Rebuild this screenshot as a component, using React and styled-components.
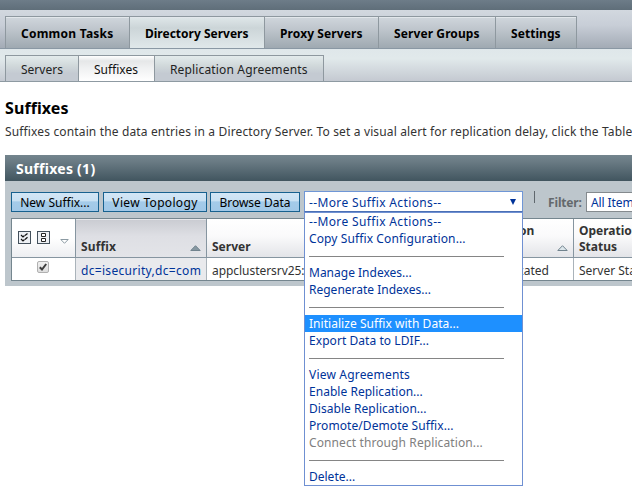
import React from 'react';
import styled, { createGlobalStyle } from 'styled-components';

const GlobalStyle = createGlobalStyle`
  html, body { margin: 0; background: #fff; }
  body { overflow: hidden; }
  * { box-sizing: border-box; }
`;

const Page = styled.div`
  width: 632px;
  height: 489px;
  overflow: hidden;
  font: 12px/17px 'Noto Sans', 'Open Sans', sans-serif;
  color: #333;
  white-space: nowrap;
`;

const Masthead = styled.div`
  height: 10px;
  background: linear-gradient(#6d7c88, #5f6e79);
`;

const PrimaryNav = styled.nav`
  display: flex;
  height: 39px;
  padding: 6px 0 0 5px;
  background: linear-gradient(#d2d8df, #c8ced7 40%, #a3abb5);
  border-bottom: 1px solid #8a98a4;
`;

const PrimaryTab = styled.a`
  width: ${(p) => p.$width}px;
  padding: 8px 0 0 15px;
  border: solid #8e989f;
  border-width: 1px 0 0 1px;
  font-weight: 700;
  letter-spacing: ${(p) => p.$tracking || 0}px;
  color: #000;
  background: ${(p) => (p.$active
    ? 'linear-gradient(#dfe7e9, #ccd5d8 35%, #e0e8ea)'
    : 'linear-gradient(#d0d6dc, #bec5cc 40%, #9fa9b1)')};
  box-shadow: inset 0 1px #e2e7eb;
  &:last-child { border-right-width: 1px; }
`;

const SecondaryNav = styled.nav`
  display: flex;
  height: 33px;
  padding: 6px 0 0 5px;
  background: linear-gradient(#dfe7ea, #e1e9eb 30%, #c4c9d1);
  border-bottom: 1px solid #8e9aa2;
`;

const SecondaryTab = styled.a`
  width: ${(p) => p.$width}px;
  padding: 5px 0 0 15px;
  border: solid #8e989f;
  border-width: 1px 0 0 1px;
  letter-spacing: ${(p) => p.$tracking || 0}px;
  color: ${(p) => (p.$active ? '#111' : '#222')};
  background: ${(p) => (p.$active
    ? 'linear-gradient(#fff, #e5e7e8 20%, #f0f1f2 50%, #fff)'
    : 'linear-gradient(#e3ebec, #d0d8da 40%, #c4cad2 70%, #c4cad2)')};
  &:last-child { border-right-width: 1px; }
`;

const Title = styled.h1`
  margin: 15px 0 0 5px;
  font-size: 16px;
  line-height: 22px;
  letter-spacing: 0.08px;
  color: #000;
`;

const Description = styled.p`
  margin: 4px 0 0 5px;
  height: 32px;
  letter-spacing: 0.145px;
`;

const Panel = styled.section`
  margin-left: 5px;
  height: 131px;
  background: #bdc6cc;
`;

const PanelHeader = styled.h2`
  margin: 0;
  height: 26px;
  padding-left: 11px;
  font-size: 14px;
  line-height: 27px;
  letter-spacing: 0.27px;
  color: #fff;
  background: linear-gradient(#74858e, #6a7b84 25%, #41555f);
`;

const Toolbar = styled.div`
  display: flex;
  align-items: flex-start;
  height: 37px;
  padding: 10px 0 0 6px;
  & > * { flex-shrink: 0; }
`;

const Button = styled.button`
  width: ${(p) => p.$width}px;
  height: 20px;
  margin: 1px ${(p) => p.$gap || 4}px 0 0;
  padding: 0;
  border: 1px solid #17618f;
  outline: 0;
  font: inherit;
  line-height: 19px;
  letter-spacing: ${(p) => p.$tracking || 0}px;
  color: #000;
  background: linear-gradient(#d3e6f5, #c9e1f3 42%, #a4cbe9 50%, #a1c8e7);
`;

const Select = styled.div`
  position: relative;
  display: flex;
  justify-content: space-between;
  align-items: center;
  width: 219px;
  height: 21px;
  padding: 1px 6px 0 4px;
  border: 1px solid #6f96d6;
  border-bottom-color: #4a6fb5;
  letter-spacing: 0.36px;
  color: #003399;
  background: #fff;
`;

const Menu = styled.ul`
  position: absolute;
  z-index: 2;
  top: 20px;
  left: -1px;
  width: 219px;
  height: 274px;
  margin: 0;
  padding: 0;
  list-style: none;
  border: 1px solid #6f90d2;
  background: #fff;
`;

const Option = styled.li`
  height: 17px;
  padding-left: 4px;
  line-height: 18px;
  letter-spacing: ${(p) => p.$tracking || 0}px;
  color: ${(p) => (p.$selected ? '#fff' : p.$disabled ? '#808080' : '#003399')};
  background: ${(p) => (p.$selected ? '#1e90ff' : 'transparent')};
`;

const Separator = styled.li`
  width: 195px;
  height: 17px;
  margin-left: 4px;
  padding-top: 9px;
  &::before { content: ''; display: block; height: 1px; background: #858585; }
`;

const Divider = styled.span`
  width: 1px;
  height: 12px;
  margin: 0 13px 0 11px;
  background: #5f676d;
`;

const FilterLabel = styled.label`
  width: 38px;
  padding-top: 3px;
  font-weight: 700;
  letter-spacing: -0.15px;
  color: #64696d;
`;

const FilterSelect = styled.div`
  width: 90px;
  height: 20px;
  margin-top: 1px;
  padding-left: 4px;
  line-height: 19px;
  border: 1px solid #848a8e;
  letter-spacing: -0.1px;
  color: #003399;
  background: #fff;
`;

const Table = styled.div`
  display: grid;
  grid-template-columns: 64px 131px 249px 118px 80px;
  grid-template-rows: 39px 22px;
  width: 643px;
  margin-left: 6px;
  border: solid #75868f;
  border-width: 1px 0 1px 1px;
`;

const HeaderCell = styled.div`
  display: flex;
  align-items: flex-end;
  justify-content: space-between;
  padding: 0 5px 2px ${(p) => p.$inset || 5}px;
  font-weight: 700;
  line-height: 16px;
  letter-spacing: ${(p) => p.$tracking || 0}px;
  border: solid #8695a0;
  border-width: 0 1px 1px 0;
  background: ${(p) => (p.$sorted
    ? 'linear-gradient(#c9cbd1, #dedfe4 45%, #e3e4e8)'
    : 'linear-gradient(#fff, #fafafb 45%, #e3e4e8)')};
  box-shadow: inset 0 1px ${(p) => (p.$sorted ? '#e7e8ec' : '#fff')};
`;

const SelectionHeader = styled(HeaderCell)`
  justify-content: flex-start;
  align-items: center;
  gap: 6px;
  padding: 0 0 1px 6px;
  background: linear-gradient(#fff, #fff 50%, #edeef1);
`;

const Cell = styled.div`
  padding: 4px 0 0 ${(p) => p.$inset || 5}px;
  letter-spacing: ${(p) => p.$tracking || 0}px;
  color: ${(p) => (p.$link ? '#003399' : '#333')};
  background: ${(p) => (p.$sorted ? '#e9eaed' : '#fff')};
  border-right: 1px solid #aab3ba;
`;

const Check = styled.span`
  display: flex;
  width: 12px;
  height: 12px;
  margin: -1px 0 0 -1px;
  border: 1px solid #b0b0b0;
  border-radius: 2px;
  background: linear-gradient(#f0f0f0, #dedede);
`;

const SortIcon = styled.svg`
  flex: none;
  margin-bottom: 4px;
`;

const ToggleIcon = styled.svg`
  margin: 7px 0 0 4px;
`;

const ArrowUp = ({ filled }) => (
  <SortIcon width="11" height="6" viewBox="0 0 11 6">
    <path d="M.8 5.5 5.5.7l4.7 4.8z" fill={filled ? '#8798a2' : '#dce6eb'} stroke="#71838e" />
  </SortIcon>
);

const SelectAllIcon = () => (
  <svg width="13" height="13" viewBox="0 0 13 13">
    <rect x=".5" y=".5" width="12" height="12" fill="#edf0f4" stroke="#44515c" />
    <path d="m3 4 2 2 1.500-1.500M7 4.500l2.500-2M3 8l2 2 1.500-1.500M7 8.500l2.500-2.200" fill="none" stroke="#111" strokeWidth="1.2" />
  </svg>
);

const DeselectAllIcon = () => (
  <svg width="13" height="13" viewBox="0 0 13 13">
    <rect x=".5" y=".5" width="12" height="12" fill="#edf0f4" stroke="#44515c" />
    <path d="M4.500 2.500h4v3h-4zM4.500 7.500h4v3h-4z" fill="#fff" stroke="#222" />
  </svg>
);

const options = [
  { text: '--More Suffix Actions--', tracking: 0.36 },
  { text: 'Copy Suffix Configuration...', tracking: 0.11 },
  null,
  { text: 'Manage Indexes...' },
  { text: 'Regenerate Indexes...' },
  null,
  { text: 'Initialize Suffix with Data...', tracking: 0.04, selected: true },
  { text: 'Export Data to LDIF...', tracking: 0.06 },
  null,
  { text: 'View Agreements', tracking: 0.19 },
  { text: 'Enable Replication...', tracking: 0.03 },
  { text: 'Disable Replication...', tracking: 0.04 },
  { text: 'Promote/Demote Suffix...', tracking: 0.07 },
  { text: 'Connect through Replication...', tracking: 0.1, disabled: true },
  null,
  { text: 'Delete...' },
];

export default function App() {
  return (
    <Page>
      <GlobalStyle />
      <Masthead />
      <PrimaryNav>
        <PrimaryTab $width={124} $tracking={0.24}>Common Tasks</PrimaryTab>
        <PrimaryTab $width={135} $active>Directory Servers</PrimaryTab>
        <PrimaryTab $width={114} $tracking={0.1}>Proxy Servers</PrimaryTab>
        <PrimaryTab $width={117} $tracking={0.1}>Server Groups</PrimaryTab>
        <PrimaryTab $width={82} $tracking={0.05}>Settings</PrimaryTab>
      </PrimaryNav>
      <SecondaryNav>
        <SecondaryTab $width={73}>Servers</SecondaryTab>
        <SecondaryTab $width={76} $active>Suffixes</SecondaryTab>
        <SecondaryTab $width={170} $tracking={0.15}>Replication Agreements</SecondaryTab>
      </SecondaryNav>
      <Title>Suffixes</Title>
      <Description>
        Suffixes contain the data entries in a Directory Server. To set a visual alert for replication delay, click the Table
      </Description>
      <Panel>
        <PanelHeader>Suffixes (1)</PanelHeader>
        <Toolbar>
          <Button $width={88}>New Suffix...</Button>
          <Button $width={104} $gap={3} $tracking={0.33}>View Topology</Button>
          <Button $width={90}>Browse Data</Button>
          <Select>
            --More Suffix Actions--
            <svg width="6" height="6" viewBox="0 0 6 6"><path d="M0 0h6L3 6z" fill="#003399" /></svg>
            <Menu>
              {options.map((o, i) => (o
                ? <Option key={i} $tracking={o.tracking} $selected={o.selected} $disabled={o.disabled}>{o.text}</Option>
                : <Separator key={i} />))}
            </Menu>
          </Select>
          <Divider />
          <FilterLabel>Filter:</FilterLabel>
          <FilterSelect>All Items</FilterSelect>
        </Toolbar>
        <Table>
          <SelectionHeader>
            <SelectAllIcon />
            <DeselectAllIcon />
            <ToggleIcon width="9" height="5" viewBox="0 0 9 5"><path d="M.8.5h7.4L4.5 4.300z" fill="#fff" stroke="#8b9aa3" /></ToggleIcon>
          </SelectionHeader>
          <HeaderCell $sorted $tracking={0.15}>Suffix<ArrowUp filled /></HeaderCell>
          <HeaderCell>Server</HeaderCell>
          <HeaderCell $inset={11}><span>Replication<br />Role</span><ArrowUp /></HeaderCell>
          <HeaderCell><span>Operational<br />Status</span></HeaderCell>
          <Cell $inset={26}>
            <Check>
              <svg width="10" height="10" viewBox="0 0 10 10"><path d="m1.800 5.200 2.200 2.300L8.200 2" fill="none" stroke="#3d3d3d" strokeWidth="2" /></svg>
            </Check>
          </Cell>
          <Cell $sorted $link $tracking={0.31}>dc=isecurity,dc=com</Cell>
          <Cell $tracking={-0.05}>appclustersrv25:</Cell>
          <Cell $inset={13}>Not replicated</Cell>
          <Cell>Server Started</Cell>
        </Table>
      </Panel>
    </Page>
  );
}
